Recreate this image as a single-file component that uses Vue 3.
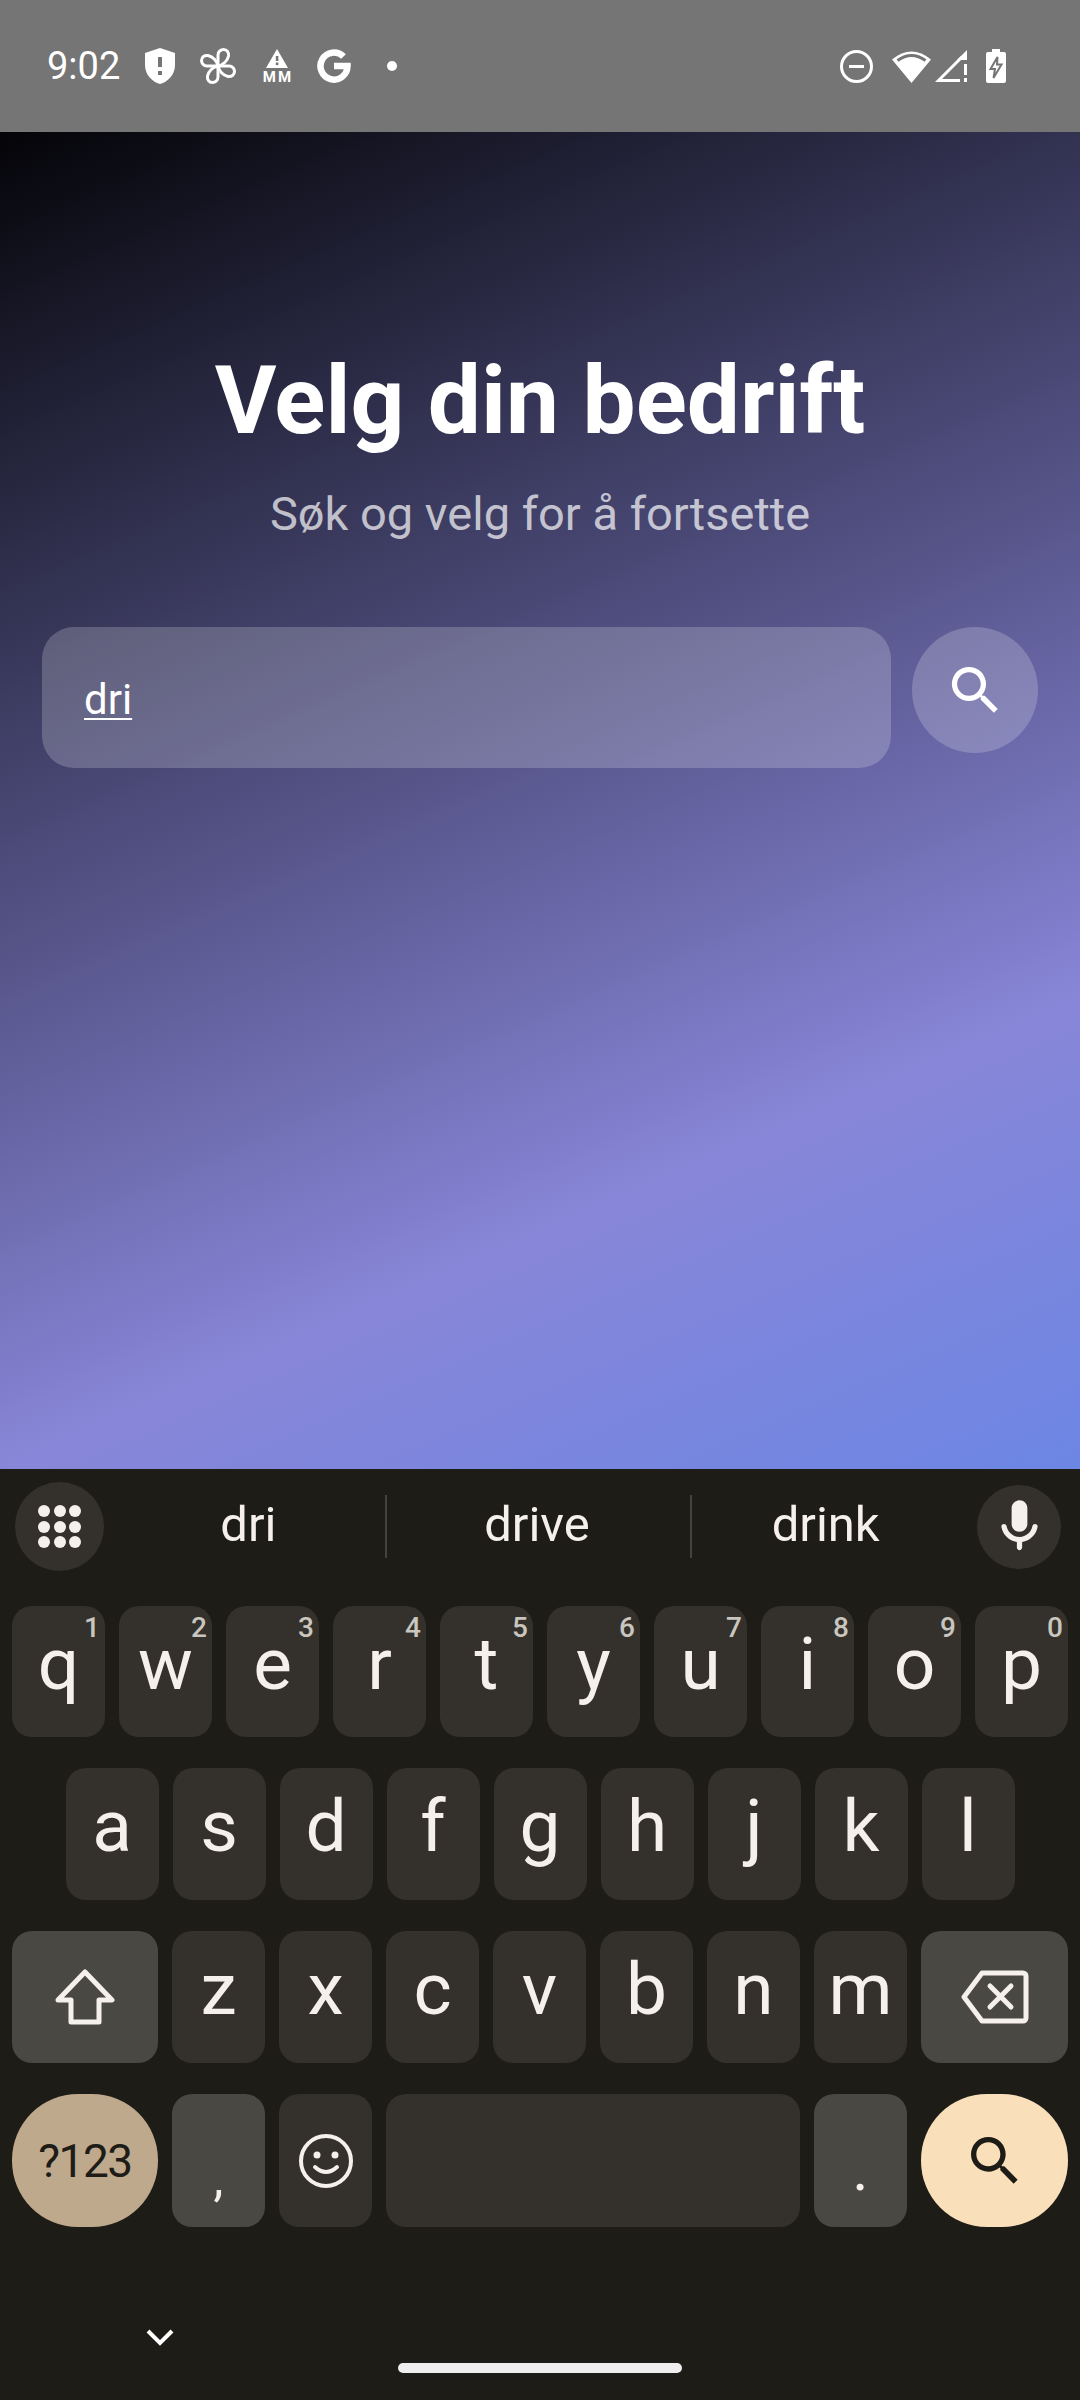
<script setup>
const topRow = [
  ["q", "1"], ["w", "2"], ["e", "3"], ["r", "4"], ["t", "5"],
  ["y", "6"], ["u", "7"], ["i", "8"], ["o", "9"], ["p", "0"],
];
const midRow = ["a", "s", "d", "f", "g", "h", "j", "k", "l"];
const lowRow = ["z", "x", "c", "v", "b", "n", "m"];
const suggestions = ["dri", "drive", "drink"];
const searchPath =
  "M15.5 14h-.79l-.28-.27A6.471 6.471 0 0 0 16 9.5 6.5 6.5 0 1 0 9.5 16c1.61 0 3.09-.59 4.23-1.57l.27.28v.79l5 4.99L20.49 19l-4.99-5zm-6 0C7.01 14 5 11.99 5 9.5S7.01 5 9.5 5 14 7.01 14 9.5 11.99 14 9.5 14z";
</script>

<template>
  <div class="phone">
    <div class="status">
      <span class="time">9:02</span>
      <svg class="shield" width="30" height="36" viewBox="0 0 30 36">
        <path d="M15 0 30 5V17C30 27 23 33.500 15 36 7 33.500 0 27 0 17V5Z" fill="#fff" />
        <rect x="13" y="9" width="4" height="10" fill="#757575" />
        <rect x="13" y="23" width="4" height="4" fill="#757575" />
      </svg>
      <svg class="fan" width="36" height="36" viewBox="0 0 36 36" fill="none" stroke="#fff" stroke-width="3" stroke-linejoin="round">
        <g v-for="r in [0, 90, 180, 270]" :key="r" :transform="`rotate(${r} 18 18)`">
          <path d="M18 18V7C18 3.500 21 1.500 23.500 1.500C27 1.500 29 4.500 28.500 8C27.500 13 23 17 18 18Z" />
        </g>
      </svg>
      <div class="warn">
        <svg width="22" height="19" viewBox="0 0 22 19">
          <path d="M11 0 22 19H0Z" fill="#fff" />
          <rect x="9.800" y="7" width="2.600" height="5" fill="#757575" />
          <rect x="9.800" y="13.500" width="2.600" height="2.600" fill="#757575" />
        </svg>
        <span class="mm">MM</span>
      </div>
      <svg class="google" width="34" height="34" viewBox="0 0 34 34" fill="none" stroke="#fff" stroke-width="6.500">
        <path d="M26.500 7.500A13.500 13.500 0 1 0 30.500 17H17" />
      </svg>
      <span class="dot"></span>

      <span class="spacer"></span>

      <svg class="dnd" width="33" height="33" viewBox="0 0 33 33" fill="none" stroke="#fff" stroke-width="3">
        <circle cx="16.500" cy="16.500" r="15" />
        <path d="M9 16.500H24" />
      </svg>
      <svg class="wifi" width="39" height="33" viewBox="0 0 39 33">
        <path d="M19.500 33 0 9.500Q19.500-6.500 39 9.500Z" fill="#fff" />
        <path d="M5.500 10.500Q19.500 0.500 33.500 10.500" fill="none" stroke="#757575" stroke-width="3" />
      </svg>
      <svg class="signal" width="32" height="32" viewBox="0 0 32 32">
        <path d="M25 30.500H3.500L27 7" fill="none" stroke="#fff" stroke-width="3" />
        <path d="M32 0V10H22Z" fill="#fff" />
        <rect x="29" y="14" width="3" height="11" fill="#fff" />
        <rect x="29" y="28" width="3" height="4" fill="#fff" />
      </svg>
      <svg class="battery" width="20" height="34" viewBox="0 0 20 34">
        <path d="M6 0H14V3H18A2 2 0 0 1 20 5V32A2 2 0 0 1 18 34H2A2 2 0 0 1 0 32V5A2 2 0 0 1 2 3H6Z" fill="#fff" />
        <path d="M11.500 8 4.500 20H9L7.500 29 15.500 15.500H11Z" fill="#fff" stroke="#757575" stroke-width="2" />
      </svg>
    </div>

    <main class="content">
      <h1 class="title">Velg din bedrift</h1>
      <p class="subtitle">Søk og velg for å fortsette</p>
      <div class="search-row">
        <div class="field"><span class="typed">dri</span></div>
        <button class="search-btn">
          <svg width="63" height="63" viewBox="0 0 24 24" fill="#fff"><path :d="searchPath" /></svg>
        </button>
      </div>
    </main>

    <section class="keyboard">
      <div class="suggest-bar">
        <div class="grid-btn">
          <span v-for="n in 9" :key="n"></span>
        </div>
        <div class="suggestions">
          <span v-for="s in suggestions" :key="s" class="suggestion">{{ s }}</span>
          <i class="divider first"></i>
          <i class="divider second"></i>
        </div>
        <div class="mic-btn">
          <svg width="63" height="63" viewBox="0 0 24 24" fill="#f6f0ea">
            <path d="M12 14c1.660 0 3-1.340 3-3V5c0-1.660-1.340-3-3-3S9 3.340 9 5v6c0 1.660 1.340 3 3 3zm5.910-3c-.49 0-.9.36-.98.85C16.520 14.200 14.470 16 12 16s-4.520-1.800-4.930-4.150c-.08-.49-.49-.85-.98-.85-.61 0-1.090.54-1 1.140.49 3 2.890 5.350 5.910 5.780V20c0 .55.45 1 1 1s1-.45 1-1v-2.080c3.020-.43 5.420-2.780 5.910-5.780.1-.6-.39-1.140-1-1.140z" />
          </svg>
        </div>
      </div>

      <div class="rows">
        <div class="row first-row">
          <div v-for="k in topRow" :key="k[0]" class="key">
            {{ k[0] }}<span class="hint">{{ k[1] }}</span>
          </div>
        </div>
        <div class="row">
          <div v-for="k in midRow" :key="k" class="key">{{ k }}</div>
        </div>
        <div class="row">
          <div class="key shift func">
            <svg width="60" height="56" viewBox="0 0 60 56" fill="none" stroke="#f6f0ea" stroke-width="5" stroke-linejoin="round">
              <path d="M30 3 57 31H44V53H16V31H3Z" />
            </svg>
          </div>
          <div v-for="k in lowRow" :key="k" class="key">{{ k }}</div>
          <div class="key del func">
            <svg width="68" height="54" viewBox="0 0 68 54" fill="none" stroke="#f6f0ea" stroke-width="5" stroke-linejoin="round" stroke-linecap="round">
              <path d="M21 3H62A3 3 0 0 1 65 6V48A3 3 0 0 1 62 51H21L3 27Z" />
              <path d="M29 16 50 37M50 16 29 37" />
            </svg>
          </div>
        </div>
        <div class="row last-row">
          <div class="key shift symbols">?123</div>
          <div class="key func comma">,</div>
          <div class="key">
            <svg class="icon-raise" width="54" height="54" viewBox="0 0 54 54" fill="none" stroke="#f6f0ea" stroke-width="4" stroke-linecap="round">
              <circle cx="27" cy="27" r="25" />
              <path d="M16 33Q27 43 38 33" />
              <circle cx="18" cy="21" r="3.500" fill="#f6f0ea" stroke="none" />
              <circle cx="36" cy="21" r="3.500" fill="#f6f0ea" stroke="none" />
            </svg>
          </div>
          <div class="key space"></div>
          <div class="key func period">.</div>
          <div class="key del action">
            <svg width="64" height="64" viewBox="0 0 24 24" fill="#1e1c17"><path :d="searchPath" /></svg>
          </div>
        </div>
      </div>

      <div class="nav">
        <svg class="chevron" width="28" height="18" viewBox="0 0 28 18" fill="none" stroke="#fff" stroke-width="4">
          <path d="M2 2 14 14 26 2" />
        </svg>
        <span class="pill"></span>
      </div>
    </section>
  </div>
</template>

<style>
html,
body {
  margin: 0;
  background: #1e1c17;
}
</style>

<style scoped>
.phone {
  width: 1080px;
  height: 2400px;
  display: flex;
  flex-direction: column;
  overflow: hidden;
  font-family: Roboto, "Liberation Sans", sans-serif;
}

.status {
  height: 132px;
  flex: none;
  background: #757575;
  display: flex;
  align-items: center;
  padding: 0 74px 0 47px;
  box-sizing: border-box;
  color: #fff;
}

.status svg {
  flex: none;
}

.time {
  font-size: 38px;
  width: 98px;
  line-height: 1;
}

.fan {
  margin-left: 25px;
}

.warn {
  width: 30px;
  margin-left: 26px;
  display: flex;
  flex-direction: column;
  align-items: center;
  gap: 2px;
}

.mm {
  font-size: 15px;
  line-height: 14px;
  font-weight: 700;
  white-space: nowrap;
  letter-spacing: 2px;
  margin-right: -2px;
}

.google {
  margin-left: 25px;
}

.dot {
  width: 10px;
  height: 10px;
  border-radius: 50%;
  background: #fff;
  margin-left: 36px;
}

.spacer {
  flex: 1;
}

.wifi {
  margin-left: 19px;
}

.signal {
  margin-left: 4px;
}

.battery {
  margin-left: 19px;
}

.content {
  height: 1337px;
  flex: none;
  box-sizing: border-box;
  padding-top: 209px;
  text-align: center;
  background: linear-gradient(156.500deg, #040408 0%, #8886d8 74%, #6c86e4 100%);
}

.title {
  margin: 0;
  font-size: 94.500px;
  line-height: 120px;
  font-weight: 700;
  color: #fff;
}

.subtitle {
  margin: 23px 0 0;
  font-size: 47px;
  line-height: 60px;
  color: rgba(255, 255, 255, 0.7);
}

.search-row {
  margin-top: 83px;
  padding: 0 42px;
  display: flex;
  gap: 21px;
  align-items: flex-start;
}

.field {
  flex: 1;
  height: 141px;
  box-sizing: border-box;
  padding: 4px 42px 0;
  border-radius: 32px;
  background: rgba(255, 255, 255, 0.2);
  display: flex;
  align-items: center;
  text-align: left;
}

.typed {
  font-size: 42px;
  color: #fff;
  text-decoration: underline;
  text-underline-offset: 4px;
  text-decoration-thickness: 2px;
}

.search-btn {
  width: 126px;
  height: 126px;
  flex: none;
  padding: 0;
  border: none;
  border-radius: 50%;
  background: rgba(255, 255, 255, 0.2);
  display: flex;
  align-items: center;
  justify-content: center;
}

.keyboard {
  flex: 1;
  background: #1e1c17;
  display: flex;
  flex-direction: column;
  color: #f6f0ea;
}

.suggest-bar {
  height: 137px;
  flex: none;
  box-sizing: border-box;
  padding: 0 19px 22px 15px;
  display: flex;
  align-items: center;
}

.grid-btn {
  width: 89px;
  height: 89px;
  flex: none;
  border-radius: 50%;
  background: #34312c;
  display: grid;
  grid-template-columns: repeat(3, 12px);
  grid-auto-rows: 12px;
  gap: 3.500px;
  align-content: center;
  justify-content: center;
}

.grid-btn span {
  border-radius: 50%;
  background: #f6f0ea;
}

.suggestions {
  position: relative;
  flex: 1;
  display: flex;
  margin-right: 7px;
}

.suggestion {
  flex: 1;
  height: 63px;
  font-size: 49px;
  line-height: 60px;
  text-align: center;
}

.divider {
  position: absolute;
  top: 0;
  width: 2px;
  height: 63px;
  background: #45433e;
}

.divider.first {
  left: 281px;
}

.divider.second {
  left: 586px;
}

.mic-btn {
  width: 84px;
  height: 84px;
  flex: none;
  border-radius: 50%;
  background: #34312c;
  display: flex;
  align-items: center;
  justify-content: center;
}

.rows {
  display: flex;
  flex-direction: column;
  gap: 31px;
  padding: 0 12px;
}

.row {
  display: flex;
  justify-content: center;
  gap: 14px;
}

.key {
  position: relative;
  width: 93px;
  height: 132px;
  flex: none;
  box-sizing: border-box;
  padding-bottom: 16px;
  border-radius: 20px;
  background: #34312c;
  display: flex;
  align-items: center;
  justify-content: center;
  font-size: 73px;
}

.first-row .key {
  height: 131px;
}

.last-row .key {
  height: 133px;
}

.hint {
  position: absolute;
  top: 5px;
  right: 5px;
  font-size: 28px;
  line-height: 1.200;
  font-weight: 500;
  color: #c9c5bf;
}

.shift {
  width: 146px;
}

.del {
  width: 147px;
}

.func {
  background: #4a4843;
}

.shift.func,
.del.func {
  padding-bottom: 0;
}

.comma {
  font-size: 50px;
  padding-bottom: 0;
  padding-top: 34px;
}

.period {
  font-size: 62px;
  padding-bottom: 0;
  padding-top: 16px;
}

.symbols {
  padding-bottom: 0;
  border-radius: 66px;
  background: #bfa98c;
  color: #1e1c17;
  font-size: 46px;
  letter-spacing: -1.500px;
}

.space {
  width: 414px;
}

.action {
  padding-bottom: 0;
  border-radius: 66px;
  background: #fadfbb;
}

.icon-raise {
  margin-top: 16px;
}

.nav {
  position: relative;
  flex: 1;
}

.chevron {
  position: absolute;
  left: 146px;
  top: 102px;
}

.pill {
  position: absolute;
  left: 398px;
  top: 136px;
  width: 284px;
  height: 10px;
  border-radius: 5px;
  background: #eeeeee;
}
</style>
